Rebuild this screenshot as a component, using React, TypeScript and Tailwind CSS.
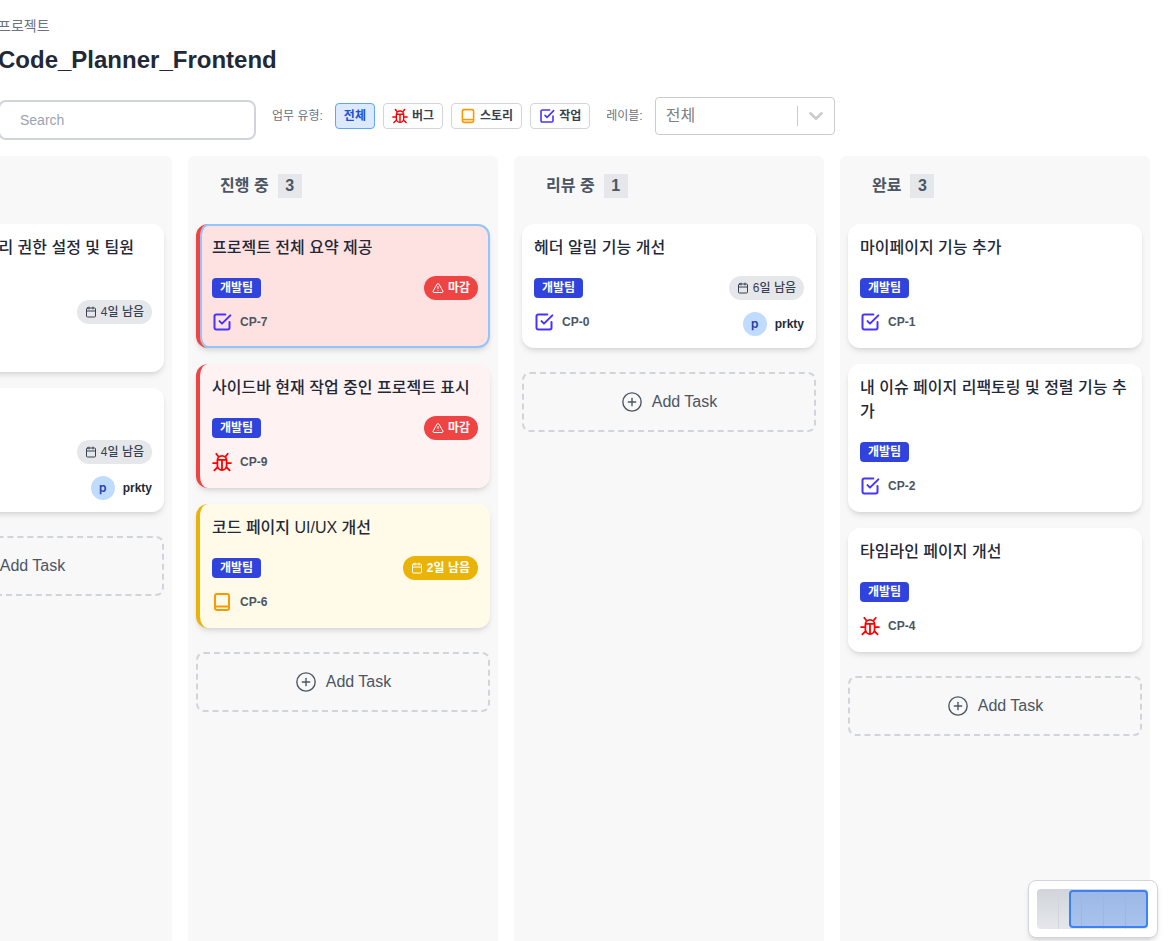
import { AlertTriangle, Calendar, ChevronDown, CirclePlus } from "lucide-react";
import { FiCheckSquare } from "react-icons/fi";

type Kind = "task" | "bug" | "story";
type Tone = "plain" | "red" | "redActive" | "yellow";

interface Task {
  title: string;
  code?: string;
  kind?: Kind;
  tone?: Tone;
  due?: string;
  user?: boolean;
}

const columns: { name: string; count?: number; tasks: Task[] }[] = [
  {
    name: "",
    tasks: [
      { title: "멤버 역할 목록 관리 권한 설정 및 팀원 초대", due: "4일 남음", code: "CP-3", kind: "task" },
      { title: "팀 권한 관리 기능", due: "4일 남음", code: "CP-5", kind: "task", user: true },
    ],
  },
  {
    name: "진행 중",
    count: 3,
    tasks: [
      { title: "프로젝트 전체 요약 제공", code: "CP-7", kind: "task", tone: "redActive", due: "마감" },
      { title: "사이드바 현재 작업 중인 프로젝트 표시", code: "CP-9", kind: "bug", tone: "red", due: "마감" },
      { title: "코드 페이지 UI/UX 개선", code: "CP-6", kind: "story", tone: "yellow", due: "2일 남음" },
    ],
  },
  {
    name: "리뷰 중",
    count: 1,
    tasks: [{ title: "헤더 알림 기능 개선", code: "CP-0", kind: "task", due: "6일 남음", user: true }],
  },
  {
    name: "완료",
    count: 3,
    tasks: [
      { title: "마이페이지 기능 추가", code: "CP-1", kind: "task" },
      { title: "내 이슈 페이지 리팩토링 및 정렬 기능 추가", code: "CP-2", kind: "task" },
      { title: "타임라인 페이지 개선", code: "CP-4", kind: "bug" },
    ],
  },
];

function BookIcon({ size }: { size: number }) {
  return (
    <svg width={size} height={size} viewBox="0 0 20 20" fill="none" stroke="currentColor" strokeWidth="2" className="text-[#ff9800]">
      <rect x="3" y="2" width="14" height="16" rx="2" />
      <path d="M3 14.5h14" />
    </svg>
  );
}

function BugIcon({ size }: { size: number }) {
  return (
    <svg width={size} height={size} viewBox="0 0 20 20" fill="none" stroke="currentColor" strokeWidth="1.8" className="text-[#ff0000]">
      <path d="M5.4 8.4a4.6 4.6 0 0 1 9.2 0v5a4.6 4.6 0 0 1-9.2 0z" />
      <path d="M5.4 7.8h9.2M10 8v9.6" />
      <path d="M6.6 4.8 3.8 1.2M13.4 4.8l2.8-3.6" />
      <path d="M5.4 11.2H.4M14.6 11.2h5" />
      <path d="M5.8 15 1.8 18.8M14.2 15l4 3.8" />
    </svg>
  );
}

function KindIcon({ kind, size = 20 }: { kind: Kind; size?: number }) {
  if (kind === "bug") return <BugIcon size={size} />;
  if (kind === "story") return <BookIcon size={size} />;
  return <FiCheckSquare size={size} strokeWidth={2.4} className="text-[#4733ff]" />;
}

function DuePill({ due, tone }: { due: string; tone: Tone }) {
  if (due === "마감") {
    return (
      <span className="flex h-6 items-center gap-1 rounded-full bg-[#ef4444] px-2 text-xs font-bold text-white">
        <AlertTriangle size={12} />
        {due}
      </span>
    );
  }
  if (tone === "yellow") {
    return (
      <span className="flex h-6 items-center gap-1 rounded-full bg-[#eab308] px-2 text-xs font-bold text-white">
        <Calendar size={12} />
        {due}
      </span>
    );
  }
  return (
    <span className="flex h-6 items-center gap-1 rounded-full bg-[#e5e7eb] px-2 text-xs font-medium text-[#374151]">
      <Calendar size={12} />
      {due}
    </span>
  );
}

function TaskCard({ task }: { task: Task }) {
  const tone = task.tone ?? "plain";
  const toneClass =
    tone === "redActive"
      ? "border-l-4 border-[#ef4444] bg-[#fee2e2] ring-2 ring-inset ring-[#93c5fd]"
      : tone === "red"
        ? "border-l-4 border-[#ef4444] bg-[#fef2f2]"
        : tone === "yellow"
          ? "border-l-4 border-[#eab308] bg-[#fffbe8]"
          : "bg-white";

  return (
    <div className={`rounded-xl p-3 shadow-md ${toneClass}`}>
      <div className="min-h-6 text-base leading-6 font-medium text-[#1f2937]">{task.title}</div>
      <div className="mt-4 flex h-6 items-center justify-between">
        <span className="rounded-sm bg-[#3043dc] px-2 text-xs leading-5 font-bold text-white">개발팀</span>
        {task.due && <DuePill due={task.due} tone={tone} />}
      </div>
      <div className="mt-3 flex h-6 items-center justify-between">
        <div className="flex h-5 items-center gap-2 self-start">
          <span className="flex w-5 justify-center">{task.kind && <KindIcon kind={task.kind} />}</span>
          <span className="text-xs font-semibold text-[#4b5563]">{task.code}</span>
        </div>
        {task.user && (
          <div className="flex items-center gap-2">
            <span className="flex size-6 items-center justify-center rounded-full bg-[#bfdbfe] font-['Inter',sans-serif] text-xs font-semibold text-[#1e40af]">
              p
            </span>
            <span className="text-xs font-semibold text-[#1f2937]">prkty</span>
          </div>
        )}
      </div>
    </div>
  );
}

function FilterButton({ children, active }: { children: React.ReactNode; active?: boolean }) {
  return (
    <button
      className={`flex h-[26px] items-center gap-1 rounded border px-2 text-xs font-semibold ${
        active ? "border-[#60a5fa] bg-[#dbeafe] text-[#1d4ed8]" : "border-[#d1d5db] bg-white text-[#374151]"
      }`}
    >
      {children}
    </button>
  );
}

export default function App() {
  return (
    <div className="relative h-[941px] overflow-hidden bg-white font-['Liberation_Sans','Noto_Sans_CJK_KR',sans-serif]">
      <div className="ml-[-2px] pt-4">
        <div className="text-sm leading-5 text-[#6b7280]">프로젝트</div>
        <h1 className="mt-2 text-2xl leading-8 font-bold text-[#1f2937]">Code_Planner_Frontend</h1>
      </div>

      <div className="mt-[21px] ml-[-2px] flex items-start">
        <div className="mt-[3px] flex h-10 w-[258px] items-center rounded-lg border-2 border-[#d1d5db] pl-[20px] text-sm text-[#9ca3af]">
          Search
        </div>
        <div className="flex h-[38px] items-center">
          <span className="ml-4 text-xs text-[#6b7280]">업무 유형:</span>
          <div className="ml-3 flex items-center gap-2">
            <FilterButton active>전체</FilterButton>
            <FilterButton>
              <KindIcon kind="bug" size={16} />
              버그
            </FilterButton>
            <FilterButton>
              <KindIcon kind="story" size={16} />
              스토리
            </FilterButton>
            <FilterButton>
              <KindIcon kind="task" size={16} />
              작업
            </FilterButton>
          </div>
          <span className="ml-4 text-xs text-[#6b7280]">레이블:</span>
          <div className="ml-3 flex h-[38px] w-[180px] items-center rounded border border-[#cccccc] pl-[10px] text-base text-[#808080]">
            <span className="flex-1">전체</span>
            <span className="h-5 w-px bg-[#cccccc]" />
            <ChevronDown size={22} className="mx-[7px] text-[#cccccc]" strokeWidth={2.8} />
          </div>
        </div>
      </div>

      <div className="mt-4 ml-[-138px] flex gap-4">
        {columns.map((col) => (
          <div key={col.name} className="h-[800px] w-[310px] shrink-0 rounded-md bg-[#f8f8f8] p-2">
            <div className="mb-4 flex h-11 items-center gap-[9px] pl-6">
              {col.name && <span className="text-base font-semibold text-[#4b5563]">{col.name}</span>}
              {col.count !== undefined && (
                <span className="flex size-6 items-center justify-center bg-[#e5e7eb] text-base font-semibold text-[#4b5563]">
                  {col.count}
                </span>
              )}
            </div>
            <div className="flex flex-col gap-4">
              {col.tasks.map((task) => (
                <TaskCard key={task.code} task={task} />
              ))}
              <button className="mt-2 flex h-[60px] items-center justify-center gap-[9px] rounded-lg border-2 border-dashed border-[#d1d5db] text-base text-[#4b5563]">
                <CirclePlus size={22} strokeWidth={1.5} />
                Add Task
              </button>
            </div>
          </div>
        ))}
      </div>

      <div className="absolute right-[11px] bottom-[3px] flex h-[58px] w-[130px] items-center rounded-lg border border-[#d1d5db] bg-white pl-2 shadow-md">
        <div className="relative flex h-10 w-[111px] overflow-hidden rounded-sm bg-gradient-to-b from-[#d1d5db] to-[#e5e7eb]">
          <div className="h-full w-[22px] border-r border-[#d1d5db]" />
          <div className="h-full w-[23px] border-r border-[#d1d5db]" />
          <div className="h-full w-[22px] border-r border-[#d1d5db]" />
          <div className="h-full w-[22px] border-r border-[#d1d5db]" />
          <div className="absolute top-px right-0 bottom-px left-[32px] rounded border-2 border-[#3b82f6] bg-[#3b82f6]/35" />
        </div>
      </div>
    </div>
  );
}
